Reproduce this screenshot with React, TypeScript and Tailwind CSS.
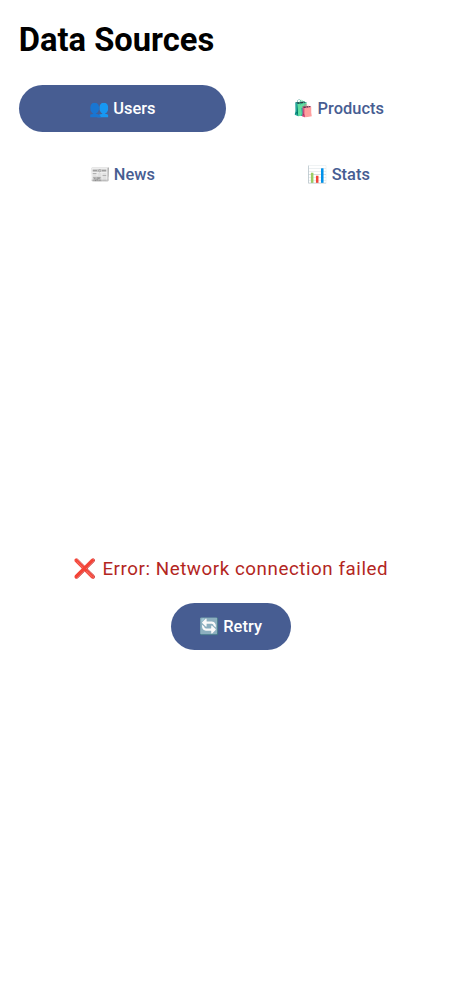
const tabs = [
  { icon: '👥', label: 'Users' },
  { icon: '🛍️', label: 'Products' },
  { icon: '📰', label: 'News' },
  { icon: '📊', label: 'Stats' },
];

export default function App() {
  return (
    <main className="flex h-[1000px] flex-col bg-white px-[18.75px] pt-[18.75px] font-['Roboto',sans-serif]">
      <h1 className="h-[42px] text-[32.7px] leading-[42px] font-bold whitespace-nowrap text-black">Data Sources</h1>
      <nav className="mt-[24px] grid grid-cols-2 gap-x-[9.4px] gap-y-[19px]">
        {tabs.map((tab, index) => (
          <button
            key={tab.label}
            type="button"
            className={`h-[47px] rounded-full pt-[2px] text-[16.4px] font-[480] tracking-[0.05px] whitespace-nowrap ${
              index === 0 ? 'bg-[#475d92] text-white' : 'text-[#475d92]'
            }`}
          >
            {tab.icon} {tab.label}
          </button>
        ))}
      </nav>
      <section className="mt-[357px] flex flex-col items-center">
        <p className="text-[18.75px] leading-[28px] tracking-[0.56px] whitespace-nowrap text-[#b3261e]">
          <span className="mr-[0.8px]">❌</span> Error: Network connection failed
        </p>
        <button
          type="button"
          className="mt-[20px] h-[47px] w-[120px] rounded-full bg-[#475d92] pt-[2px] text-[16.4px] font-[480] tracking-[0.05px] whitespace-nowrap text-white"
        >
          🔄 Retry
        </button>
      </section>
    </main>
  );
}
